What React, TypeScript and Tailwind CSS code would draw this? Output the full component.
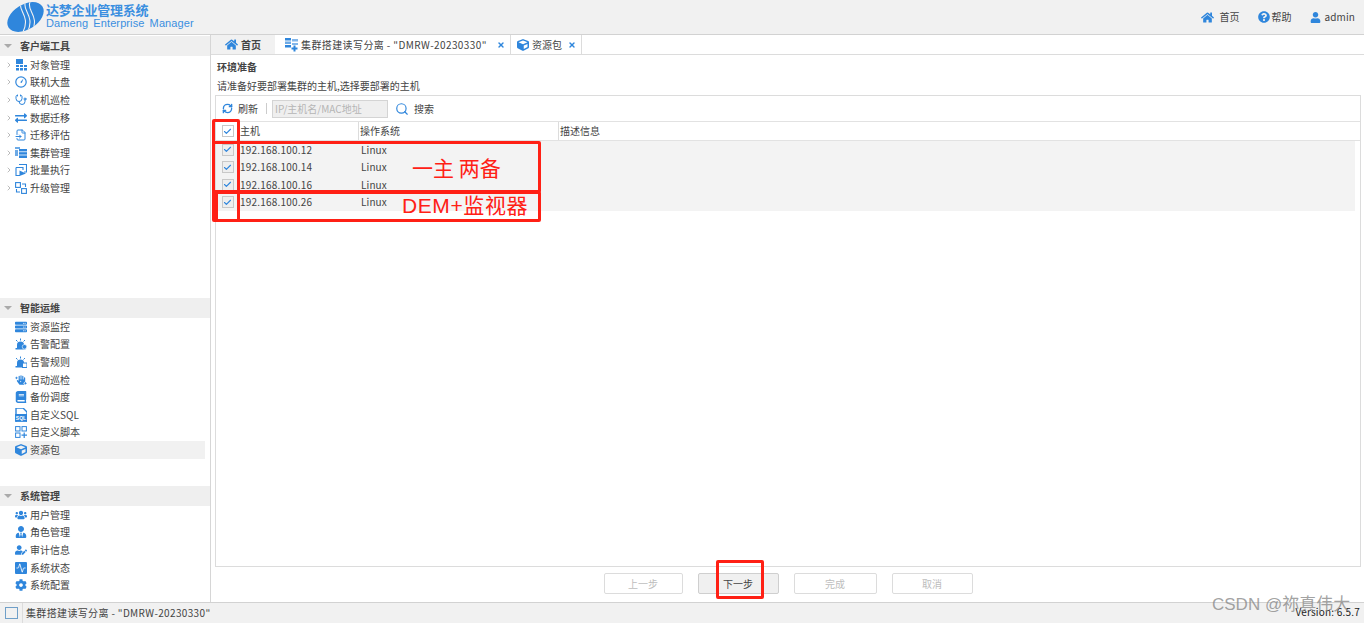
import React from 'react';
import { FaHome, FaQuestionCircle, FaUser, FaCube, FaExchangeAlt, FaServer, FaUsers, FaUserTie, FaUserEdit, FaCog, FaBook, FaHandSparkles } from 'react-icons/fa';
import { Stethoscope, FileInput, Activity, RefreshCw, Search, Check, X, ChevronRight } from 'lucide-react';

const B = '#2f86dc';
type Item = { icon: React.ReactNode; label: string; active?: boolean };
const s12 = { size: 12, color: B };
const l12 = { size: 12, color: B, strokeWidth: 2 };

function Ico({ children }: { children: React.ReactNode }) {
  return <svg width="12" height="12" viewBox="0 0 12 12" fill={B} stroke="none">{children}</svg>;
}

const TableIcon = () => (
  <Ico>
    <rect x="1" y="0" width="7" height="5" />
    <rect x="1" y="6" width="3" height="2" />
    <rect x="5" y="6" width="3" height="2" />
    <rect x="9" y="6" width="3" height="2" />
    <rect x="1" y="9" width="3" height="2.5" />
    <rect x="5" y="9" width="3" height="2.5" />
    <rect x="9" y="9" width="3" height="2.5" />
  </Ico>
);
const GaugeIcon = () => (
  <Ico>
    <circle cx="6" cy="6" r="5.2" fill="none" stroke={B} strokeWidth="1.2" />
    <path d="M8.5 2.5 L6.8 7 L5.2 6.2 Z" />
  </Ico>
);
const ClusterIcon = () => (
  <Ico>
    <rect x="0" y="0" width="5" height="2" opacity="0.7" />
    <rect x="0" y="3" width="3" height="6" opacity="0.7" />
    <rect x="4" y="2" width="8" height="2.4" />
    <rect x="4" y="5.2" width="8" height="2.4" />
    <rect x="4" y="8.4" width="8" height="2.6" />
  </Ico>
);
const BatchIcon = () => (
  <Ico>
    <path d="M4 0.5H11.5V8H9" fill="none" stroke={B} strokeWidth="1.1" />
    <path d="M1 3.5H8V6" fill="none" stroke={B} strokeWidth="1.1" />
    <path d="M1 3.5V11.5H5" fill="none" stroke={B} strokeWidth="1.1" />
    <path d="M4.5 6.5L11 9.5L4.5 12Z" />
  </Ico>
);
const UpgradeIcon = () => (
  <Ico>
    <rect x="0.6" y="0.6" width="4.8" height="4.8" fill="none" stroke={B} strokeWidth="1.1" />
    <rect x="6.6" y="6.6" width="4.8" height="4.8" fill="none" stroke={B} strokeWidth="1.1" />
    <path d="M7 2H10.5V5M5 10H1.5V7" fill="none" stroke={B} strokeWidth="1.1" />
  </Ico>
);
const AlarmIcon = ({ small }: { small?: boolean }) => (
  <Ico>
    <path d="M2 10V6.5C2 4.5 3.5 3.5 5.5 3.5S9 4.5 9 6.5V10Z" />
    <path d="M5.5 0.5V2.5M1 2L2.5 3.5M10 2L8.5 3.5" fill="none" stroke={B} strokeWidth="1" />
    <rect x="0.5" y="10" width="10" height="1.5" />
    {small ? <rect x="7.5" y="7" width="4.5" height="4.5" fill="#fff" stroke={B} strokeWidth="1" /> : <circle cx="9.5" cy="8.8" r="2.3" stroke="#fff" strokeWidth="0.6" />}
  </Ico>
);
const SqlIcon = () => (
  <svg width="12" height="14" viewBox="0 0 12 14">
    <path d="M1 0H8L12 4V14H1Z" fill="none" stroke={B} strokeWidth="1.4" />
    <path d="M0 6H12V13.5H0Z" fill={B} />
    <text x="6" y="12" textAnchor="middle" fontSize="5" fontWeight="700" fill="#fff" fontFamily="Liberation Sans">SQL</text>
  </svg>
);
const ScriptIcon = () => (
  <Ico>
    <rect x="0.6" y="0.6" width="4.4" height="4.4" fill="none" stroke={B} strokeWidth="1" />
    <rect x="7" y="0.6" width="4.4" height="4.4" fill="none" stroke={B} strokeWidth="1" />
    <rect x="0.6" y="7" width="4.4" height="4.4" fill="none" stroke={B} strokeWidth="1" />
    <path d="M9.2 6.5V12M6.5 9.2H12" fill="none" stroke={B} strokeWidth="1.2" />
  </Ico>
);
const TabClusterIcon = () => (
  <svg width="14" height="14" viewBox="0 0 14 14" fill={B}>
    <rect x="0" y="0" width="6" height="2.5" />
    <rect x="7" y="1" width="6" height="2.5" opacity="0.6" />
    <rect x="0" y="3.5" width="6" height="2.5" opacity="0.7" />
    <rect x="0" y="7" width="6" height="2.5" />
    <rect x="7" y="5" width="6" height="2" opacity="0.6" />
    <path d="M9.5 7.5V13.5M6.5 10.5H12.5" fill="none" stroke={B} strokeWidth="2" />
  </svg>
);

const client: Item[] = [
  { icon: <TableIcon />, label: '对象管理' },
  { icon: <GaugeIcon />, label: '联机大盘' },
  { icon: <Stethoscope {...l12} />, label: '联机巡检' },
  { icon: <FaExchangeAlt {...s12} />, label: '数据迁移' },
  { icon: <FileInput {...l12} />, label: '迁移评估' },
  { icon: <ClusterIcon />, label: '集群管理' },
  { icon: <BatchIcon />, label: '批量执行' },
  { icon: <UpgradeIcon />, label: '升级管理' },
];
const ops: Item[] = [
  { icon: <FaServer {...s12} />, label: '资源监控' },
  { icon: <AlarmIcon />, label: '告警配置' },
  { icon: <AlarmIcon small />, label: '告警规则' },
  { icon: <FaHandSparkles {...s12} />, label: '自动巡检' },
  { icon: <FaBook {...s12} />, label: '备份调度' },
  { icon: <SqlIcon />, label: '自定义SQL' },
  { icon: <ScriptIcon />, label: '自定义脚本' },
  { icon: <FaCube {...s12} />, label: '资源包', active: true },
];
const sys: Item[] = [
  { icon: <FaUsers {...s12} />, label: '用户管理' },
  { icon: <FaUserTie {...s12} />, label: '角色管理' },
  { icon: <FaUserEdit {...s12} />, label: '审计信息' },
  { icon: <span className="flex h-[12px] w-[12px] items-center justify-center rounded-[1px] bg-[#2f86dc]"><Activity size={10} color="#fff" /></span>, label: '系统状态' },
  { icon: <FaCog {...s12} />, label: '系统配置' },
];

function Section({ title, items, arrows, className }: { title: string; items: Item[]; arrows?: boolean; className: string }) {
  return (
    <section className={className}>
      <div className="flex h-[20px] items-center bg-[#efefef] pl-[4px] font-bold text-[#444]">
        <span className="h-0 w-0 border-x-[4px] border-t-[4px] border-x-transparent border-t-[#aaa]" />
        <span className="ml-[8px]">{title}</span>
      </div>
      <ul>
        {items.map((it) => (
          <li key={it.label} className={`flex h-[17.6px] items-center pl-[5px] ${it.active ? 'mr-[5px] bg-[#f1f1f1]' : ''}`}>
            <span className="flex w-[10px] justify-start">{arrows && <ChevronRight size={8} color="#999" strokeWidth={2} />}</span>
            <span className="flex w-[15px] justify-start">{it.icon}</span>
            <span>{it.label}</span>
          </li>
        ))}
      </ul>
    </section>
  );
}

function Box({ muted }: { muted?: boolean }) {
  return (
    <span className={`flex h-[12px] w-[12px] items-center justify-center border border-[#c8c8c8] ${muted ? 'bg-white' : 'bg-[#eeeeee]'}`}>
      <Check size={9} color={B} strokeWidth={3} />
    </span>
  );
}

const hosts = ['192.168.100.12', '192.168.100.14', '192.168.100.16', '192.168.100.26'];

function Btn({ label, w, primary }: { label: string; w: string; primary?: boolean }) {
  return (
    <button className={`flex h-[21px] items-center justify-center rounded-[2px] border ${w} ${primary ? 'border-[#cfcfcf] bg-[#f0f0f0] text-[#444]' : 'border-[#dcdcdc] bg-white text-[#bdbdbd]'}`}>
      {label}
    </button>
  );
}

function Frame({ className }: { className: string }) {
  return <div className={`pointer-events-none absolute rounded-[2px] border-[3px] border-[#ff2015] ${className}`} />;
}

export default function App() {
  return (
    <div className="relative flex h-[623px] w-[1364px] flex-col overflow-hidden bg-white text-[10px] leading-none text-[#444] [font-family:'Noto_Sans_CJK_SC','Liberation_Sans',sans-serif]">
      <header className="flex h-[35px] shrink-0 items-center justify-between border-b border-[#d2d2d2] bg-[#f1f1f1] pl-[6px] pr-[9px]">
        <div className="flex items-center">
          <svg width="39" height="30" viewBox="0 0 39 30">
            <defs>
              <clipPath id="dm-logo">
                <ellipse cx="19.5" cy="15" rx="20" ry="12.5" transform="rotate(-32 19.5 15)" />
              </clipPath>
            </defs>
            <g clipPath="url(#dm-logo)">
              <rect width="39" height="30" fill="#2f86dc" />
              <path d="M15 0C11 8 25 14 17 30M19.5 0C15.5 8 29.5 14 21.5 30M24 0C20 8 34 14 26 30" fill="none" stroke="#f1f1f1" strokeWidth="1.1" />
            </g>
          </svg>
          <div className="ml-[1px] -mt-[2px] flex flex-col text-[#3b8fe0]">
            <span className="text-[13px] font-bold leading-[15px] tracking-[-0.2px]">达梦企业管理系统</span>
            <span className="text-[11px] leading-[13px] tracking-[0.1px] [word-spacing:2px] [font-family:'Liberation_Sans',sans-serif]">Dameng Enterprise Manager</span>
          </div>
        </div>
        <nav className="flex items-center text-[10px]">
          <FaHome size={13} color={B} />
          <span className="ml-[6px]">首页</span>
          <FaQuestionCircle size={12} color={B} className="ml-[18px]" />
          <span className="ml-[2px]">帮助</span>
          <FaUser size={11} color={B} className="ml-[18px]" />
          <span className="ml-[4px] tracking-[0.1px]">admin</span>
        </nav>
      </header>

      <div className="flex min-h-0 flex-1">
        <aside className="flex w-[211px] shrink-0 flex-col border-r border-[#d6d6d6] pt-[1px]">
          <Section title="客户端工具" items={client} arrows className="h-[262px]" />
          <Section title="智能运维" items={ops} className="h-[188px]" />
          <Section title="系统管理" items={sys} className="flex-1" />
        </aside>

        <main className="flex min-w-0 flex-1 flex-col">
          <div className="flex h-[20px] shrink-0 border-b border-[#dcdcdc]">
            <div className="flex w-[64px] items-center justify-center gap-[3px] bg-[#f1f1f1] font-bold">
              <FaHome size={13} color={B} /><span>首页</span>
            </div>
            <div className="flex w-[236px] items-center border-r border-[#dcdcdc] bg-white pl-[10px]">
              <TabClusterIcon />
              <span className="ml-[2px] tracking-[0.4px]">集群搭建读写分离 - "DMRW-20230330"</span>
              <X size={8} color={B} strokeWidth={4} className="ml-auto mr-[5px]" />
            </div>
            <div className="flex w-[71px] items-center border-r border-[#dcdcdc] bg-white pl-[6px]">
              <FaCube size={12} color={B} />
              <span className="ml-[3px]">资源包</span>
              <X size={8} color={B} strokeWidth={4} className="ml-auto mr-[5px]" />
            </div>
          </div>

          <div className="flex min-h-0 flex-1 flex-col pl-[4px] pr-[3px]">
            <h2 className="pl-[2px] pt-[6px] font-bold leading-[12px]">环境准备</h2>
            <p className="mt-[7px] pl-[2px] leading-[12px]">请准备好要部署集群的主机,选择要部署的主机</p>
            <div className="mt-[3px] flex h-[472px] flex-col border border-[#dcdcdc]">
              <div className="flex h-[25px] shrink-0 items-center pl-[6px]">
                <RefreshCw size={11} color={B} strokeWidth={3} />
                <span className="ml-[5px]">刷新</span>
                <span className="ml-[8px] h-[11px] w-px bg-[#ccc]" />
                <span className="ml-[5px] flex h-[18px] w-[116px] items-center border border-[#d4d4d4] bg-[#efefef] pl-[2px] text-[#b5b5b5]">IP/主机名/MAC地址</span>
                <Search size={14} color={B} className="ml-[7px]" />
                <span className="ml-[5px]">搜索</span>
              </div>
              <div className="flex h-[20px] shrink-0 items-center border-y border-[#e2e2e2]">
                <span className="flex w-[24px] justify-center pr-[1px]"><Box muted /></span>
                <span className="w-[119px] border-r border-[#dcdcdc] leading-[18px]">主机</span>
                <span className="w-[200px] border-r border-[#dcdcdc] pl-[1px] leading-[18px]">操作系统</span>
                <span className="pl-[1px]">描述信息</span>
              </div>
              <div className="mr-[5px] flex flex-col bg-[#f3f3f3]">
                {hosts.map((h) => (
                  <div key={h} className="flex h-[17.5px] items-center">
                    <span className="flex w-[24px] justify-center pr-[1px]"><Box /></span>
                    <span className="w-[120px] tracking-[0.2px]">{h}</span>
                    <span className="pl-[1px] tracking-[0.1px]">Linux</span>
                  </div>
                ))}
              </div>
            </div>
            <div className="mt-[6px] flex justify-center gap-[15px]">
              <Btn label="上一步" w="w-[79px]" />
              <Btn label="下一步" w="w-[81px]" primary />
              <Btn label="完成" w="w-[83px]" />
              <Btn label="取消" w="w-[81px]" />
            </div>
          </div>
        </main>
      </div>

      <footer className="flex h-[21px] shrink-0 items-center border-t border-[#d2d2d2] bg-[#f1f1f1] pl-[5px]">
        <span className="h-[12px] w-[13px] border border-[#6f9fc8]" />
        <span className="ml-[4px] h-full w-px bg-[#dcdcdc]" />
        <span className="ml-[3px] tracking-[0.35px]">集群搭建读写分离 - "DMRW-20230330"</span>
        <span className="ml-auto mb-[3px] mr-[4px] tracking-[0.2px] text-[#222]">Version: 6.5.7</span>
      </footer>

      <Frame className="left-[212px] top-[119px] h-[103px] w-[28px]" />
      <Frame className="left-[212px] top-[141px] h-[52px] w-[329px]" />
      <Frame className="left-[215px] top-[191px] h-[31px] w-[326px]" />
      <Frame className="left-[716px] top-[560px] h-[39px] w-[48px]" />
      <span className="absolute left-[412px] top-[155px] text-[21px] leading-[24px] text-[#ff2015]">一主 两备</span>
      <span className="absolute left-[402px] top-[194px] text-[21px] leading-[24px] tracking-[0.6px] text-[#ff2015] [font-family:'Liberation_Sans','Noto_Sans_CJK_SC',sans-serif]">DEM+监视器</span>
      <span className="absolute left-[1212px] top-[595px] text-[17px] leading-[20px] text-[#8a8a8a]/80 [font-family:'Liberation_Sans','Noto_Sans_CJK_SC',sans-serif]">CSDN @祢真伟大</span>
    </div>
  );
}
